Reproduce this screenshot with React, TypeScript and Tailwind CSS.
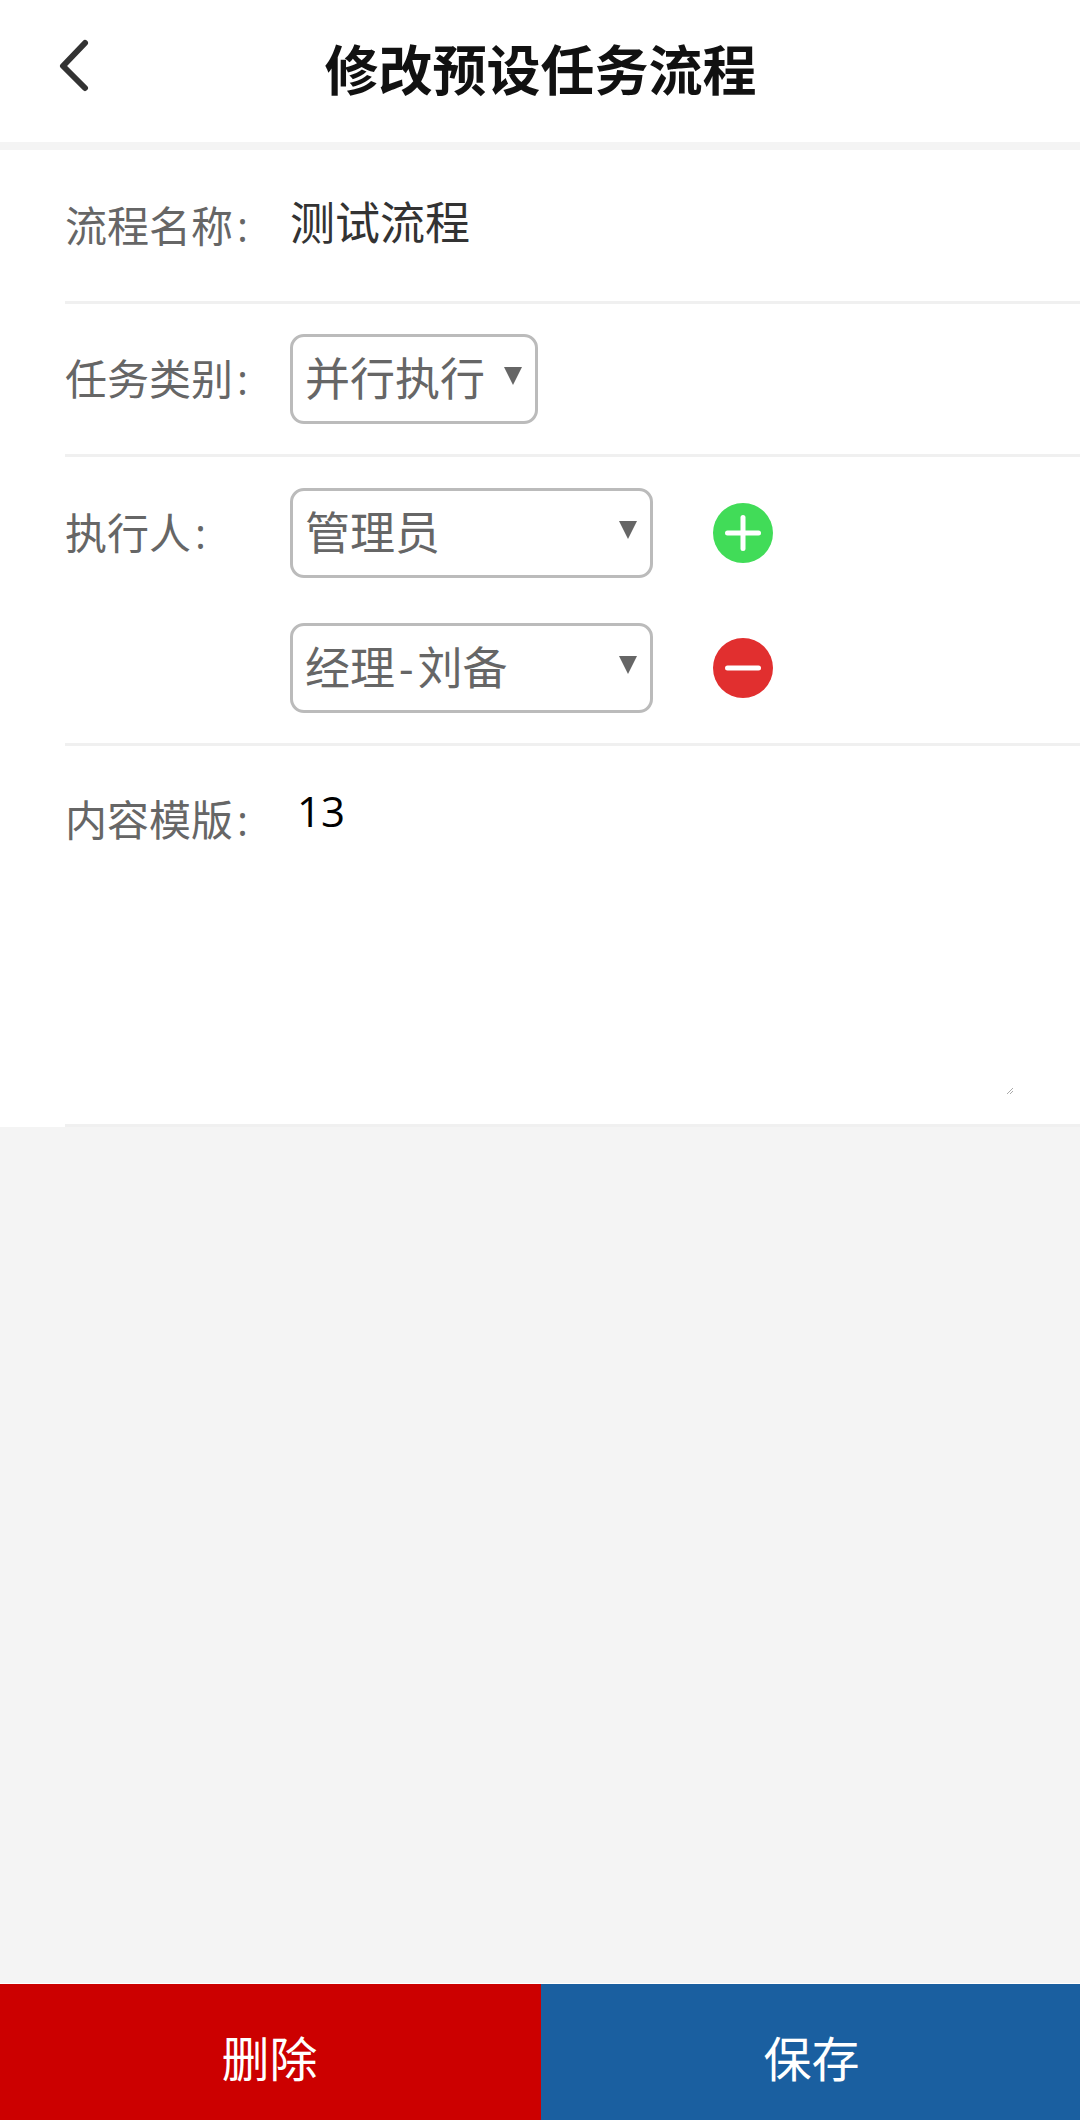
const font = "font-['Open_Sans','Noto_Sans_CJK_SC',sans-serif]"

function Select({ label, width }: { label: React.ReactNode; width: string }) {
  return (
    <div className={`${width} h-[90px] shrink-0 flex items-center justify-between rounded-[14px] border-[3px] border-[#bbbbbb] pl-[12px] pr-[13px] text-[45px] text-[#666666]`}>
      <span className="leading-[60px] whitespace-nowrap">{label}</span>
      <svg width="18" height="20" viewBox="0 0 18 20" className="mb-[6px]">
        <path d="M0 1h18L9 19z" fill="#666666" />
      </svg>
    </div>
  )
}

function Circle({ color, plus }: { color: string; plus?: boolean }) {
  return (
    <div className={`${color} ml-[60px] w-[60px] h-[60px] rounded-full flex items-center justify-center shrink-0`}>
      <svg width="36" height="36" viewBox="0 0 36 36">
        <rect x="0" y="15.5" width="36" height="5" rx="2.5" fill="#ffffff" />
        {plus && <rect x="15.5" y="0" width="5" height="36" rx="2.5" fill="#ffffff" />}
      </svg>
    </div>
  )
}

function Label({ text, className }: { text: string; className: string }) {
  return (
    <span className={`w-[225px] shrink-0 text-[42px] leading-[60px] text-[#666666] ${className}`}>
      {text}
      <span className="ml-[4px]">:</span>
    </span>
  )
}

export default function App() {
  return (
    <div className={`${font} w-[1080px] h-[2120px] bg-[#f4f4f4] flex flex-col`}>
      <header className="h-[142px] bg-white flex items-center relative shrink-0">
        <svg width="36" height="54" viewBox="0 0 36 54" className="absolute left-[58px] top-[39px]">
          <path d="M27 4 5 27l22 22" fill="none" stroke="#333333" strokeWidth="6" strokeLinecap="round" strokeLinejoin="round" />
        </svg>
        <h1 className="w-full text-center text-[54px] font-bold text-[#111111] leading-none pb-[3px] pl-[1px]">修改预设任务流程</h1>
      </header>

      <main className="mt-[8px] bg-white h-[977px] shrink-0 pl-[65px] flex flex-col">
        <div className="h-[154px] border-b-[3px] border-[#f0f0f0] flex shrink-0">
          <Label text="流程名称" className="pt-[46px]" />
          <span className="pt-[43px] text-[45px] leading-[60px] text-[#333333]">测试流程</span>
        </div>
        <div className="h-[153px] border-b-[3px] border-[#f0f0f0] flex shrink-0 pt-[30px]">
          <Label text="任务类别" className="pt-[15px]" />
          <Select label="并行执行" width="w-[248px]" />
        </div>
        <div className="h-[289px] border-b-[3px] border-[#f0f0f0] flex shrink-0 pt-[31px]">
          <Label text="执行人" className="pt-[15px]" />
          <div className="flex flex-col gap-[45px]">
            <div className="flex items-center">
              <Select label="管理员" width="w-[363px]" />
              <Circle color="bg-[#41dc58]" plus />
            </div>
            <div className="flex items-center">
              <Select label={<>经理<span className="mx-[4px]">-</span>刘备</>} width="w-[363px]" />
              <Circle color="bg-[#e12f2f]" />
            </div>
          </div>
        </div>
        <div className="flex-1 border-b-[3px] border-[#f0f0f0] flex relative">
          <Label text="内容模版" className="pt-[44px]" />
          <span className="pl-[7px] pt-[35px] text-[42px] leading-[60px] text-black">13</span>
          <svg width="6" height="6" viewBox="0 0 6 6" className="absolute left-[942px] top-[342px]">
            <path d="M0 6 6 0M3 6l3-3" stroke="#aaaaaa" strokeWidth="1" fill="none" />
          </svg>
        </div>
      </main>

      <footer className="mt-auto h-[137px] border-t border-white flex text-[48px] text-white">
        <button className="w-[541px] bg-[#cc0000] flex items-center justify-center pt-[14px] pr-[2px]">删除</button>
        <button className="flex-1 bg-[#1a5fa0] flex items-center justify-center pt-[14px] pl-[2px]">保存</button>
      </footer>
    </div>
  )
}
